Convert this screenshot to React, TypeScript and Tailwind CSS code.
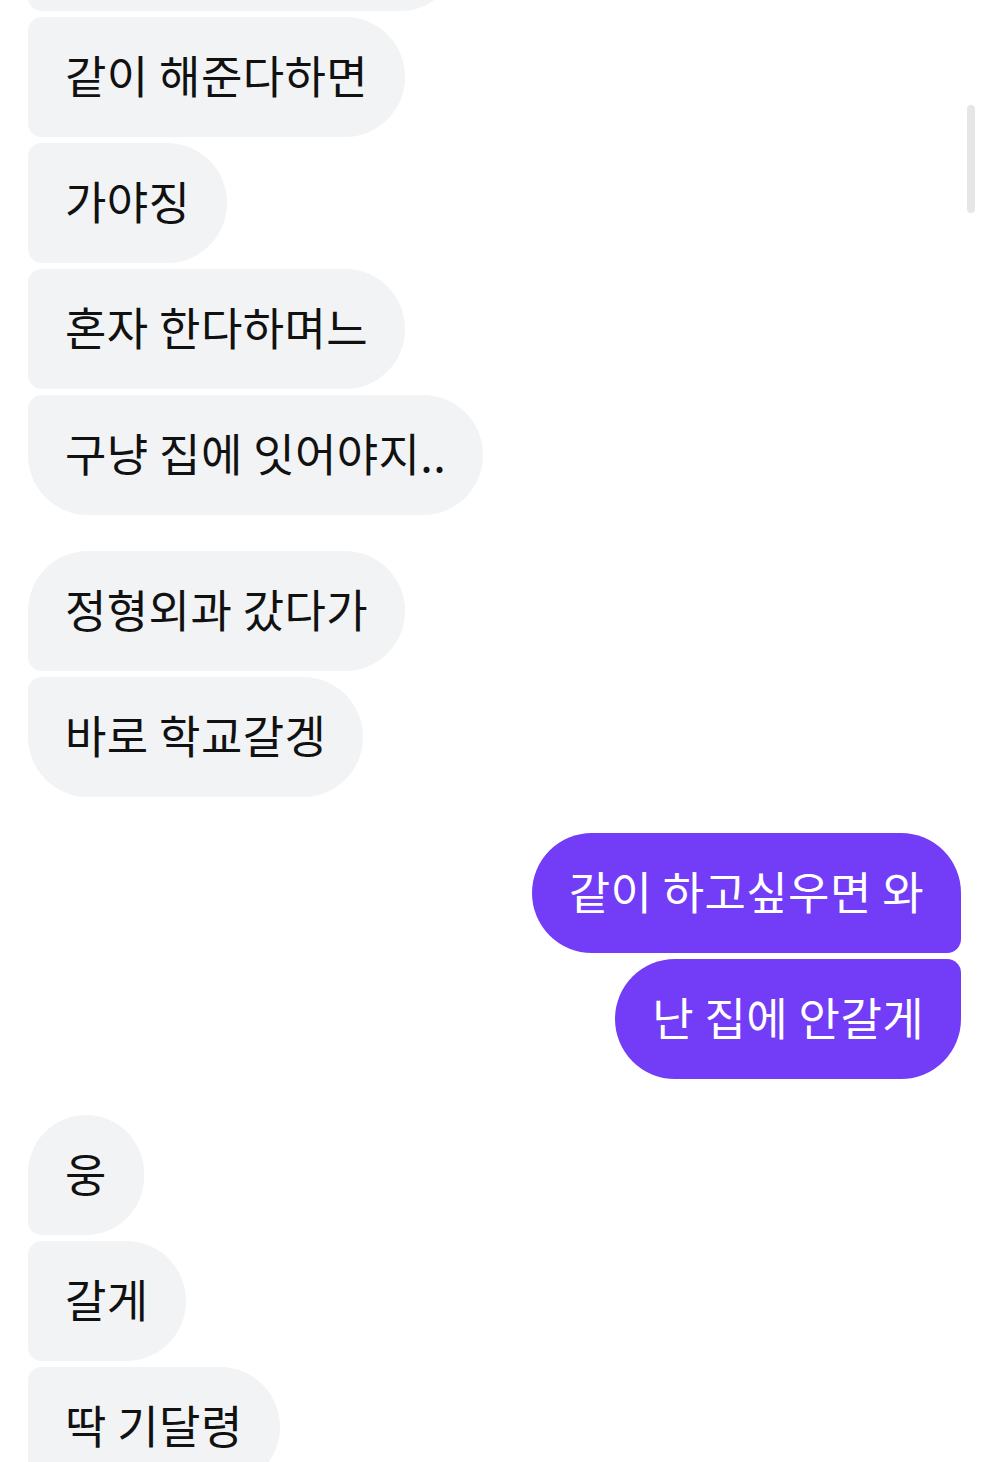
import React from 'react';

type Msg = { text: string; mine?: boolean; shape: string; gap?: boolean };

const messages: Msg[] = [
  { text: '같이 해준다하면', shape: 'rounded-l-[14px] rounded-r-[60px]' },
  { text: '가야징', shape: 'rounded-l-[14px] rounded-r-[60px]' },
  { text: '혼자 한다하며느', shape: 'rounded-l-[14px] rounded-r-[60px]' },
  { text: '구냥 집에 잇어야지..', shape: 'rounded-tl-[14px] rounded-bl-[60px] rounded-r-[60px]' },
  { text: '정형외과 갔다가', gap: true, shape: 'rounded-tl-[60px] rounded-bl-[14px] rounded-r-[60px]' },
  { text: '바로 학교갈겡', shape: 'rounded-tl-[14px] rounded-bl-[60px] rounded-r-[60px]' },
  { text: '같이 하고싶우면 와', mine: true, gap: true, shape: 'rounded-l-[60px] rounded-tr-[60px] rounded-br-[14px]' },
  { text: '난 집에 안갈게', mine: true, shape: 'rounded-l-[60px] rounded-tr-[14px] rounded-br-[60px]' },
  { text: '웅', gap: true, shape: 'rounded-tl-[60px] rounded-bl-[14px] rounded-r-[60px]' },
  { text: '갈게', shape: 'rounded-l-[14px] rounded-r-[60px]' },
  { text: '딱 기달령', shape: 'rounded-l-[14px] rounded-r-[60px]' },
];

export default function App() {
  return (
    <div
      className="relative h-[1462px] w-[985px] overflow-hidden bg-white"
      style={{ fontFamily: '"Noto Sans CJK KR", "Noto Sans", sans-serif' }}
    >
      {/* scroll thumb */}
      <div className="absolute left-[967px] top-[105px] h-[108px] w-[8px] rounded-full bg-[#e6e6e6]" />

      <div className="-mt-[109px] flex flex-col gap-[6px] pl-[28px] pr-[24px]">
        {/* previous bubble, scrolled out of view */}
        <div className="h-[120px] w-[432px] rounded-l-[14px] rounded-r-[60px] bg-[#f2f3f5]" />
        {messages.map((m, i) => (
          <div
            key={i}
            className={`flex ${m.mine ? 'justify-end' : 'justify-start'} ${m.gap ? 'mt-[30px]' : ''}`}
          >
            <div
              className={`flex h-[120px] items-center whitespace-nowrap px-[37px] pb-[6px] text-[45px] font-normal leading-none tracking-[0.4px] ${m.shape} ${
                m.mine ? 'bg-[#733cf7] text-white' : 'bg-[#f2f3f5] text-[#111111]'
              }`}
            >
              {m.text}
            </div>
          </div>
        ))}
      </div>
    </div>
  );
}
